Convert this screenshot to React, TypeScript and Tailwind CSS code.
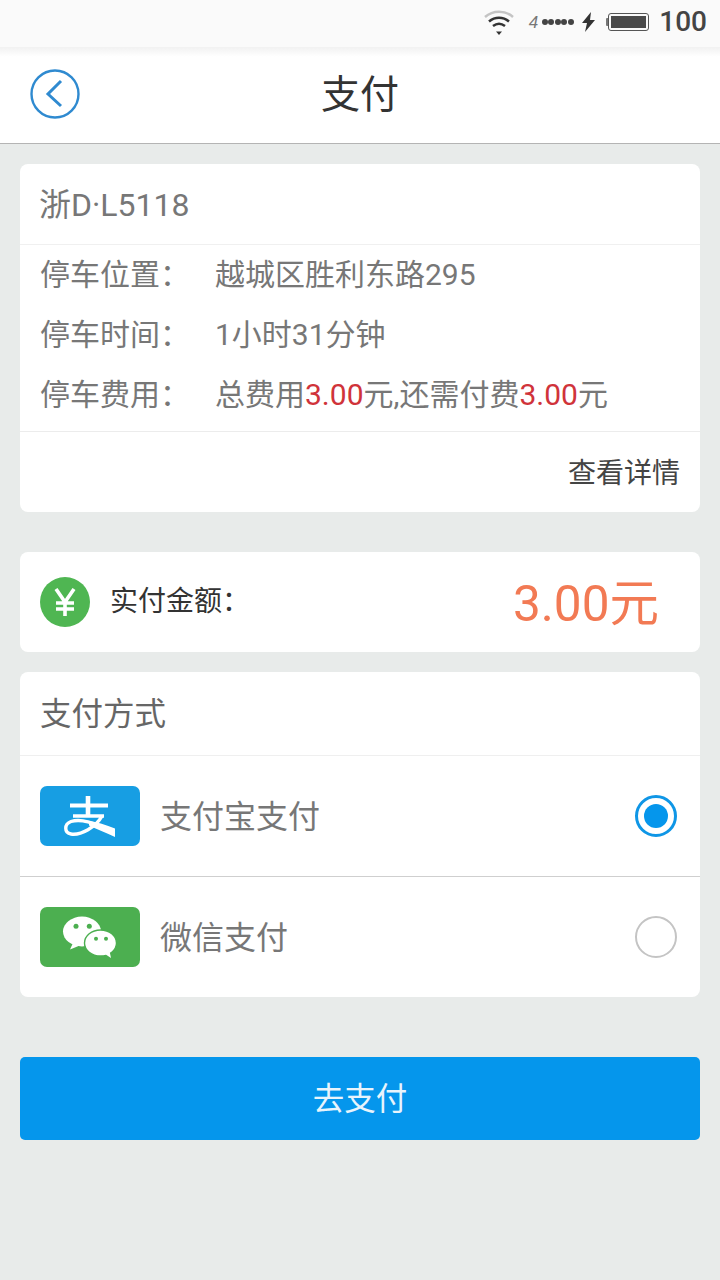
const sans = "font-['Roboto','Noto_Sans_CJK_SC',sans-serif]"

function StatusBar() {
  return (
    <div className="h-[47px] bg-[#fafafa] flex items-center justify-end pr-[13px] pb-[3px]">
      <svg width="32" height="28" viewBox="0 0 32 28" fill="none" className="mr-[14px]">
        <path d="M2 9C10 2 22 2 30 9" stroke="#c4c4c4" strokeWidth="2.5" />
        <path d="M6 13.5C12 8.5 20 8.5 26 13.5" stroke="#333" strokeWidth="2.6" />
        <path d="M10 18C14 15 18 15 22 18" stroke="#333" strokeWidth="2.6" />
        <path d="M13 23.5h6l-3 3.5z" fill="#333" />
      </svg>
      <div className="flex items-center mr-[8px]">
        <span className="w-[12px] text-[17px] leading-none italic text-[#777] font-['Liberation_Sans',sans-serif] mr-[1px]">4</span>
        {[0, 1, 2, 3, 4].map((i) => (
          <span key={i} className="w-[6px] h-[6px] rounded-full bg-[#444] mr-[0.5px]" />
        ))}
      </div>
      <svg width="14" height="20" viewBox="0 0 14 20" className="mr-[10px]">
        <path d="M9 0L0 11h5l-2 9 10-12H8z" fill="#333" />
      </svg>
      <div className="w-[2px] h-[8px] bg-[#777] rounded-l-[1px]" />
      <div className="w-[41px] h-[18px] border border-[#555] rounded-[3px] p-[2px] mr-[10px]">
        <div className="w-full h-full bg-[#4a4a4a]" />
      </div>
      <span className={`${sans} text-[28px] leading-none font-medium text-[#444]`}>100</span>
    </div>
  )
}

function Header() {
  return (
    <div className="relative h-[97px] bg-gradient-to-b from-[#f1f1f1] via-white via-[10%] to-white border-b border-[#b4b4b4] flex items-center justify-center">
      <svg width="50" height="50" viewBox="0 0 50 50" fill="none" className="absolute left-[30px] top-[22px]">
        <circle cx="25" cy="25" r="23.5" stroke="#2f8ad0" strokeWidth="2.4" />
        <path d="M31 12L18 25L31 37" stroke="#2f8ad0" strokeWidth="3" />
      </svg>
      <span className="text-[39px] leading-none text-[#333]">支付</span>
    </div>
  )
}

function InfoRow({ label, children }: { label: string; children: React.ReactNode }) {
  return (
    <div className="flex items-center h-[60px] text-[#777]">
      <span className="w-[175px] text-[30px] leading-none">{label}</span>
      <span className="text-[30px] leading-none whitespace-nowrap">{children}</span>
    </div>
  )
}

function PayRow({ name, icon, selected }: { name: string; icon: React.ReactNode; selected?: boolean }) {
  return (
    <div className="flex items-center h-[120px] pl-[20px] pr-[23px]">
      {icon}
      <span className="ml-[20px] pt-[2px] text-[32px] leading-none text-[#777]">{name}</span>
      {selected ? (
        <div className="ml-auto w-[42px] h-[42px] rounded-full border-[3px] border-[#0f96e6] flex items-center justify-center">
          <div className="w-[24px] h-[24px] rounded-full bg-[#0596ec]" />
        </div>
      ) : (
        <div className="ml-auto w-[42px] h-[42px] rounded-full border-[2px] border-[#c4c4c4]" />
      )}
    </div>
  )
}

function AlipayIcon() {
  return (
    <div className="w-[100px] h-[60px] rounded-[7px] bg-[#179ee3] flex items-center justify-center">
      <svg width="70" height="60" viewBox="0 0 70 60" fill="none" stroke="#fff">
        <path d="M15 19.5H53" strokeWidth="3.8" />
        <path d="M33 10V30" strokeWidth="4.6" />
        <path d="M18 30H49" strokeWidth="3.6" />
        <path d="M47 30C41 41 26 49.5 16 48C9 47 9 38 16 35.5C24 33 32 35.5 40 38" strokeWidth="3.4" />
        <path d="M34 35C42 36 51 39 60 42.5V51C51 47 43 43.5 34 39.5z" fill="#fff" strokeWidth="0" />
      </svg>
    </div>
  )
}

function WechatIcon() {
  return (
    <div className="w-[100px] h-[60px] rounded-[7px] bg-[#4caf50] flex items-center justify-center">
      <svg width="70" height="60" viewBox="0 0 70 60">
        <ellipse cx="27" cy="24.5" rx="19" ry="15" fill="#fff" />
        <path d="M18 36L15 42.5L26 38z" fill="#fff" />
        <circle cx="21" cy="19.3" r="2.5" fill="#4caf50" />
        <circle cx="34.3" cy="19.3" r="2.5" fill="#4caf50" />
        <ellipse cx="45.5" cy="36" rx="16" ry="13" fill="#fff" stroke="#4caf50" strokeWidth="1.4" />
        <path d="M50 47L56 51L54.5 44z" fill="#fff" />
        <circle cx="41" cy="31.7" r="2" fill="#4caf50" />
        <circle cx="51" cy="31.7" r="2" fill="#4caf50" />
      </svg>
    </div>
  )
}

export default function App() {
  return (
    <div className={`${sans} w-[720px] h-[1280px] bg-[#e8ebea] overflow-hidden`}>
      <StatusBar />
      <Header />

      <div className="px-[20px] pt-[20px]">
        <div className="bg-white rounded-[8px]">
          <div className="h-[81px] flex items-center pl-[19px] pt-[1px] border-b border-[#f0f0f0] text-[32px] leading-none text-[#777]">
            浙D·L5118
          </div>
          <div className="pl-[20px] pb-[6px] border-b border-[#ececec]">
            <InfoRow label="停车位置：">越城区胜利东路295</InfoRow>
            <InfoRow label="停车时间：">1小时31分钟</InfoRow>
            <InfoRow label="停车费用：">
              总费用<span className="text-[#d0333a]">3.00</span>元,还需付费<span className="text-[#d0333a]">3.00</span>元
            </InfoRow>
          </div>
          <div className="h-[80px] flex items-center justify-end pr-[20px] pt-[3px] text-[28px] leading-none text-[#444]">
            查看详情
          </div>
        </div>

        <div className="mt-[40px] h-[100px] bg-white rounded-[8px] flex items-center pl-[20px] pr-[41px]">
          <div className="w-[50px] h-[50px] rounded-full bg-[#4fb652] flex items-center justify-center">
            <svg width="22" height="28" viewBox="0 0 22 28" fill="none" stroke="#fff" strokeWidth="3.6">
              <path d="M2 1L11 14L20 1M11 14V28M2 15H20M2 21H20" />
            </svg>
          </div>
          <span className="ml-[20px] text-[28px] leading-none text-[#333]">实付金额：</span>
          <span className="ml-auto pt-[6px] text-[49.5px] leading-none text-[#f27a54]">3.00元</span>
        </div>

        <div className="mt-[20px] bg-white rounded-[8px] overflow-hidden">
          <div className="h-[84px] flex items-center pl-[20px] pt-[2px] border-b border-[#efefef] text-[31.5px] leading-none text-[#666]">
            支付方式
          </div>
          <PayRow name="支付宝支付" icon={<AlipayIcon />} selected />
          <div className="h-[1px] bg-[#cfcfcf]" />
          <PayRow name="微信支付" icon={<WechatIcon />} />
        </div>

        <button className="mt-[60px] w-full h-[83px] pt-[3px] bg-[#0596ec] rounded-[5px] text-[31.5px] leading-none text-[#e8f4fc]">
          去支付
        </button>
      </div>
    </div>
  )
}
